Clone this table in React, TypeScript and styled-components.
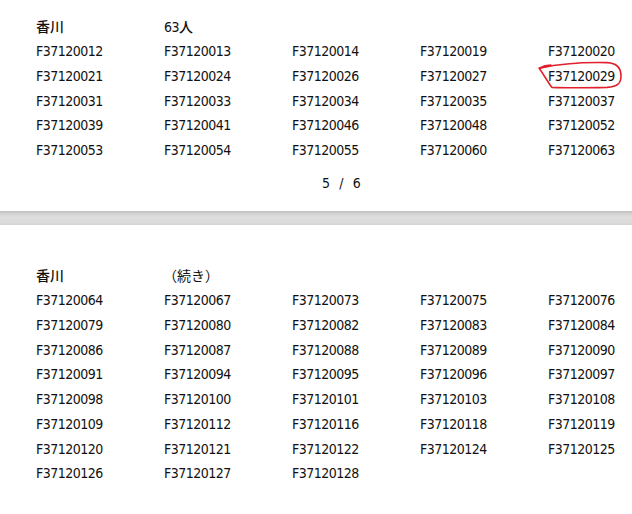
import React from "react";
import styled, { createGlobalStyle } from "styled-components";

// ---------- Global ----------

const GlobalStyle = createGlobalStyle`
  html, body {
    margin: 0;
    padding: 0;
    background: #ffffff;
  }
  body {
    font-family: "DejaVu Sans Condensed", "Noto Sans CJK JP", sans-serif;
    color: #111111;
  }
`;

// ---------- Styled Components ----------

const Viewer = styled.div`
  width: 632px;
  height: 514px;
  overflow: hidden;
  display: flex;
  flex-direction: column;
`;

const Page = styled.section<{ $top: number; $height?: number }>`
  background: #ffffff;
  padding: ${(p) => p.$top}px 0 0 36px;
  height: ${(p) => (p.$height ? `${p.$height}px` : "auto")};
  box-sizing: border-box;
  flex-shrink: 0;
`;

const Grid = styled.div`
  display: grid;
  grid-template-columns: repeat(5, 128px);
  grid-auto-rows: 24.75px;
  align-items: center;
`;

const Cell = styled.div`
  position: relative;
  font-size: 14px;
  letter-spacing: -0.5px;
  line-height: 1;
  white-space: nowrap;
`;

const HeadCell = styled(Cell)`
  font-family: "Noto Sans CJK JP", sans-serif;
  font-size: 14px;
  letter-spacing: 0;
  font-weight: 500;
`;

const NumHead = styled(Cell)``;

const ContHead = styled(HeadCell)`
  margin-left: -1px;
  font-weight: 400;
`;

const Folio = styled.div`
  margin-top: 12px;
  padding-left: 286px;
  font-size: 14px;
  letter-spacing: 2.6px;
  white-space: pre;
`;

const Gutter = styled.div`
  height: 14px;
  flex-shrink: 0;
  background: linear-gradient(
    to bottom,
    #bdbdbd 0px,
    #cfcfcf 2px,
    #dedede 6px,
    #dcdcdc 11px,
    #d2d2d2 14px
  );
`;

const Circle = styled.svg`
  position: absolute;
  left: -10px;
  top: -7px;
  width: 83px;
  height: 27px;
  pointer-events: none;
  overflow: visible;
`;

// ---------- Data ----------

const page5 = [
  "F37120012", "F37120013", "F37120014", "F37120019", "F37120020",
  "F37120021", "F37120024", "F37120026", "F37120027", "F37120029",
  "F37120031", "F37120033", "F37120034", "F37120035", "F37120037",
  "F37120039", "F37120041", "F37120046", "F37120048", "F37120052",
  "F37120053", "F37120054", "F37120055", "F37120060", "F37120063",
];

const page6 = [
  "F37120064", "F37120067", "F37120073", "F37120075", "F37120076",
  "F37120079", "F37120080", "F37120082", "F37120083", "F37120084",
  "F37120086", "F37120087", "F37120088", "F37120089", "F37120090",
  "F37120091", "F37120094", "F37120095", "F37120096", "F37120097",
  "F37120098", "F37120100", "F37120101", "F37120103", "F37120108",
  "F37120109", "F37120112", "F37120116", "F37120118", "F37120119",
  "F37120120", "F37120121", "F37120122", "F37120124", "F37120125",
  "F37120126", "F37120127", "F37120128",
];

const marked = "F37120029";

// ---------- Subcomponents ----------

const RedMark = () => (
  <Circle viewBox="0 0 84 27">
    <path
      d="M3 6 C 20 2, 45 0, 70 0.5 C 80 1, 84 6, 84 14 C 84 22, 80 25, 70 25.5 C 50 26, 25 26, 14 25.5 C 10 20, 4 10, 1 6 C 5 4, 9 3, 13 3"
      fill="none"
      stroke="#e0202c"
      strokeWidth="1.6"
      strokeLinecap="round"
      strokeLinejoin="round"
    />
  </Circle>
);

const IdCell: React.FC<{ id: string }> = ({ id }) => (
  <Cell>
    {id}
    {id === marked && <RedMark />}
  </Cell>
);

// ---------- App ----------

export default function App() {
  return (
    <>
      <GlobalStyle />
      <Viewer>
        <Page $top={14} $height={211}>
          <Grid>
            <HeadCell>香川</HeadCell>
            <NumHead>
              63<HeadCell as="span">人</HeadCell>
            </NumHead>
            <div />
            <div />
            <div />
            {page5.map((id) => (
              <IdCell key={id} id={id} />
            ))}
          </Grid>
          <Folio>5 / 6</Folio>
        </Page>
        <Gutter />
        <Page $top={38}>
          <Grid>
            <HeadCell>香川</HeadCell>
            <ContHead>（続き）</ContHead>
            <div />
            <div />
            <div />
            {page6.map((id) => (
              <IdCell key={id} id={id} />
            ))}
          </Grid>
        </Page>
      </Viewer>
    </>
  );
}
